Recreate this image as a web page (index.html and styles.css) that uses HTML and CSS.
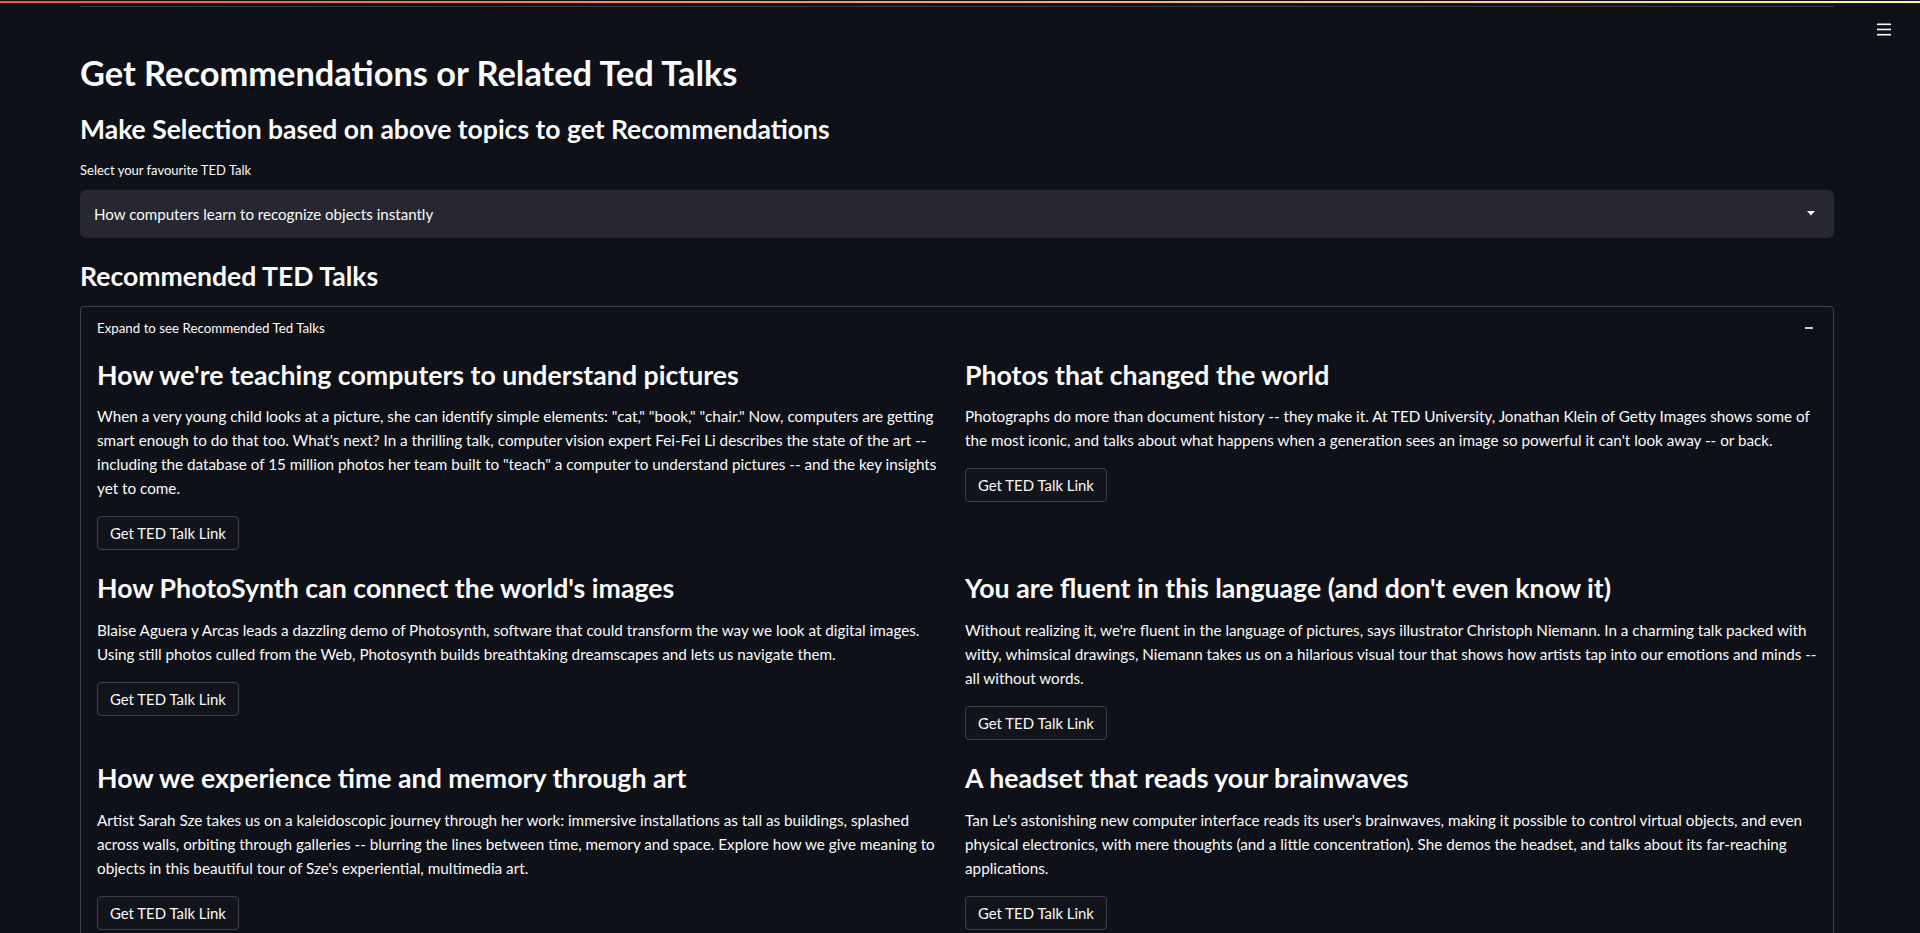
FILE: index.html
```html
<!DOCTYPE html>
<html lang="en">
<head>
<meta charset="utf-8">
<title>TED Talk Recommender</title>
<link rel="stylesheet" href="styles.css">
</head>
<body>
<div class="decoration"></div>
<button class="menu-btn" aria-label="Main menu">
  <svg width="14" height="13" viewBox="0 0 14 13"><rect x="0" y="0.5" width="14" height="1.6" fill="#fafafa"/><rect x="0" y="5.7" width="14" height="1.6" fill="#fafafa"/><rect x="0" y="10.9" width="14" height="1.6" fill="#fafafa"/></svg>
</button>
<main class="main">
  <hr class="rule">
  <h1 class="title">Get Recommendations or Related Ted Talks</h1>
  <h2 class="header">Make Selection based on above topics to get Recommendations</h2>
  <label class="field-label">Select your favourite TED Talk</label>
  <div class="select">
    <span class="select-value">How computers learn to recognize objects instantly</span>
    <svg class="select-arrow" width="8" height="5" viewBox="0 0 8 5"><polygon points="0,0 8,0 4,4.5" fill="#fafafa"/></svg>
  </div>
  <h2 class="header header-rec">Recommended TED Talks</h2>
  <section class="expander">
    <div class="expander-head">
      <span class="expander-title">Expand to see Recommended Ted Talks</span>
      <span class="minus"></span>
    </div>
    <div class="expander-body">
      <div class="row">
        <div class="col">
          <h3 class="talk-title">How we're teaching computers to understand pictures</h3>
          <p class="talk-desc">When a very young child looks at a picture, she can identify simple elements: &quot;cat,&quot; &quot;book,&quot; &quot;chair.&quot; Now, computers are getting smart enough to do that too. What's next? In a thrilling talk, computer vision expert Fei-Fei Li describes the state of the art -- including the database of 15 million photos her team built to &quot;teach&quot; a computer to understand pictures -- and the key insights yet to come.</p>
          <button class="link-btn">Get TED Talk Link</button>
        </div>
        <div class="col">
          <h3 class="talk-title">Photos that changed the world</h3>
          <p class="talk-desc">Photographs do more than document history -- they make it. At TED University, Jonathan Klein of Getty Images shows some of the most iconic, and talks about what happens when a generation sees an image so powerful it can't look away -- or back.</p>
          <button class="link-btn">Get TED Talk Link</button>
        </div>
      </div>
      <div class="row">
        <div class="col">
          <h3 class="talk-title">How PhotoSynth can connect the world's images</h3>
          <p class="talk-desc">Blaise Aguera y Arcas leads a dazzling demo of Photosynth, software that could transform the way we look at digital images. Using still photos culled from the Web, Photosynth builds breathtaking dreamscapes and lets us navigate them.</p>
          <button class="link-btn">Get TED Talk Link</button>
        </div>
        <div class="col">
          <h3 class="talk-title">You are fluent in this language (and don't even know it)</h3>
          <p class="talk-desc">Without realizing it, we're fluent in the language of pictures, says illustrator Christoph Niemann. In a charming talk packed with witty, whimsical drawings, Niemann takes us on a hilarious visual tour that shows how artists tap into our emotions and minds -- all without words.</p>
          <button class="link-btn">Get TED Talk Link</button>
        </div>
      </div>
      <div class="row">
        <div class="col">
          <h3 class="talk-title">How we experience time and memory through art</h3>
          <p class="talk-desc">Artist Sarah Sze takes us on a kaleidoscopic journey through her work: immersive installations as tall as buildings, splashed across walls, orbiting through galleries -- blurring the lines between time, memory and space. Explore how we give meaning to objects in this beautiful tour of Sze's experiential, multimedia art.</p>
          <button class="link-btn">Get TED Talk Link</button>
        </div>
        <div class="col">
          <h3 class="talk-title">A headset that reads your brainwaves</h3>
          <p class="talk-desc">Tan Le's astonishing new computer interface reads its user's brainwaves, making it possible to control virtual objects, and even physical electronics, with mere thoughts (and a little concentration). She demos the headset, and talks about its far-reaching applications.</p>
          <button class="link-btn">Get TED Talk Link</button>
        </div>
      </div>
    </div>
  </section>
</main>
</body>
</html>
```

FILE: styles.css
```css
html, body {
  margin: 0;
  padding: 0;
  background: #0e1117;
  color: #fafafa;
  font-family: Lato, "Source Sans Pro", sans-serif;
  overflow: hidden;
}

.decoration {
  position: fixed;
  top: 1px;
  left: 0;
  right: 0;
  height: 2px;
  background: linear-gradient(90deg, #ff4b4b, #fffd80);
  z-index: 5;
}

.menu-btn {
  position: fixed;
  top: 23px;
  left: 1877px;
  padding: 0;
  margin: 0;
  border: 0;
  background: none;
  line-height: 0;
}

.main {
  width: 1754px;
  padding: 6px 0 0 80px;
}

.rule {
  margin: 0;
  border: 0;
  height: 1px;
  background: #3b3d43;
}

.title {
  margin: 43.7px 0 0;
  font-size: 34.4px;
  line-height: 44px;
  font-weight: 700;
}

.header {
  margin: 16.75px 0 0;
  font-size: 26.5px;
  line-height: 36px;
  font-weight: 700;
}

.field-label {
  display: block;
  margin-top: 12.5px;
  font-size: 13px;
  line-height: 20px;
}

.select {
  margin-top: 10px;
  height: 48px;
  background: #262730;
  border-radius: 6px;
  display: flex;
  align-items: center;
  justify-content: space-between;
  padding: 0 19px 0 14px;
  box-sizing: border-box;
}

.select-value {
  font-size: 15.1px;
}

.header-rec {
  margin-top: 19.7px;
  font-size: 26.6px;
}

.expander {
  margin-top: 12.3px;
  border: 1px solid #3d4045;
  border-radius: 4px;
  height: 700px;
}

.expander-head {
  display: flex;
  align-items: center;
  justify-content: space-between;
  padding: 11.15px 20px 11px 16px;
}

.expander-title {
  font-size: 13.3px;
  line-height: 20px;
}

.minus {
  width: 8px;
  height: 1.7px;
  background: #d0d0d2;
}

.expander-body {
  padding: 6.5px 16px 0;
  display: flex;
  flex-direction: column;
  gap: 19px;
}

.row {
  display: grid;
  grid-template-columns: 1fr 1fr;
  gap: 16px;
}

.col {
  display: flex;
  flex-direction: column;
  align-items: flex-start;
}

.talk-title {
  margin: 0;
  padding-top: 1px;
  font-size: 26.7px;
  line-height: 36px;
  font-weight: 700;
}

.talk-desc {
  margin: 11.75px 0 0;
  font-size: 15.25px;
  line-height: 24px;
}

.link-btn {
  margin-top: 16px;
  padding: 4px 12px;
  font-family: inherit;
  font-size: 14.9px;
  line-height: 24px;
  color: #fafafa;
  background: #11141b;
  border: 1px solid #3d4045;
  border-radius: 4px;
}
```
